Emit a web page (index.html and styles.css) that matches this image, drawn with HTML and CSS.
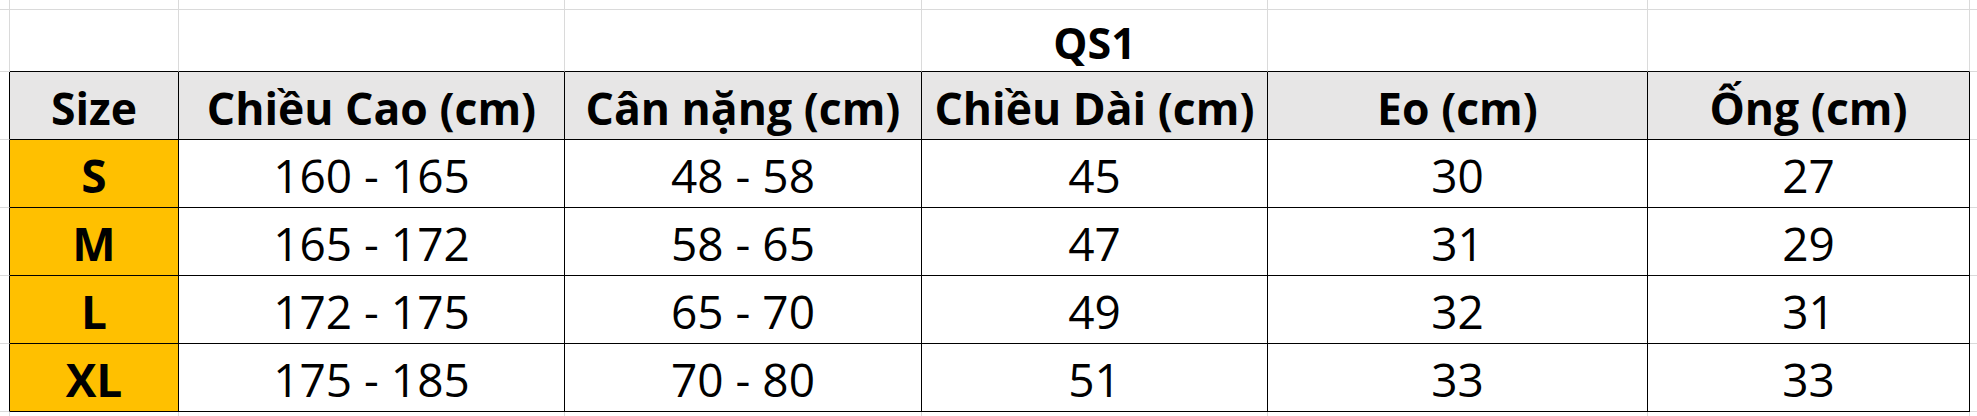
FILE: index.html
```html
<!DOCTYPE html>
<html lang="vi">
<head>
<meta charset="utf-8">
<title>QS1</title>
<link rel="stylesheet" href="styles.css">
</head>
<body>
<div class="sheet">
  <!-- row 0: partial row -->
  <div class="c"></div><div class="c"></div><div class="c"></div><div class="c"></div><div class="c"></div><div class="c"></div><div class="c"></div><div class="c end"></div>
  <!-- row 1: title -->
  <div class="c"></div>
  <div class="c top"></div>
  <div class="c top"></div>
  <div class="c top"></div>
  <div class="c top title">QS1</div>
  <div class="c top"></div>
  <div class="c top"></div>
  <div class="c end"></div>
  <!-- header -->
  <div class="c lead"></div>
  <div class="c t hd">Size</div>
  <div class="c t hd">Chiều Cao (cm)</div>
  <div class="c t hd">Cân nặng (cm)</div>
  <div class="c t hd">Chiều Dài (cm)</div>
  <div class="c t hd">Eo (cm)</div>
  <div class="c t hd">Ống (cm)</div>
  <div class="c end"></div>
  <!-- S -->
  <div class="c lead"></div>
  <div class="c t sz">S</div>
  <div class="c t">160 - 165</div>
  <div class="c t">48 - 58</div>
  <div class="c t">45</div>
  <div class="c t">30</div>
  <div class="c t">27</div>
  <div class="c end"></div>
  <!-- M -->
  <div class="c lead"></div>
  <div class="c t sz">M</div>
  <div class="c t">165 - 172</div>
  <div class="c t">58 - 65</div>
  <div class="c t">47</div>
  <div class="c t">31</div>
  <div class="c t">29</div>
  <div class="c end"></div>
  <!-- L -->
  <div class="c lead"></div>
  <div class="c t sz">L</div>
  <div class="c t">172 - 175</div>
  <div class="c t">65 - 70</div>
  <div class="c t">49</div>
  <div class="c t">32</div>
  <div class="c t">31</div>
  <div class="c end"></div>
  <!-- XL -->
  <div class="c lead"></div>
  <div class="c t sz">XL</div>
  <div class="c t">175 - 185</div>
  <div class="c t">70 - 80</div>
  <div class="c t">51</div>
  <div class="c t">33</div>
  <div class="c t">33</div>
  <div class="c end"></div>
  <!-- below -->
  <div class="c low"></div><div class="c low"></div><div class="c low"></div><div class="c low"></div><div class="c low"></div><div class="c low"></div><div class="c low"></div><div class="c low end"></div>
</div>
</body>
</html>
```

FILE: styles.css
```css
html, body {
  margin: 0;
  padding: 0;
  background: #ffffff;
}

body {
  width: 1977px;
  height: 416px;
  overflow: hidden;
  font-family: "Open Sans", "Noto Sans", "DejaVu Sans", sans-serif;
  color: #000000;
}

.sheet {
  display: grid;
  grid-template-columns: 10px 169px 386px 357px 346px 380px 322px 1fr;
  grid-template-rows: 4px 68px 68px 68px 68px 68px 68px 1fr;
  width: 1977px;
  height: 416px;
}

.c {
  box-sizing: border-box;
  border-right: 1px solid #dadada;
  border-bottom: 1px solid #dadada;
  display: flex;
  align-items: flex-end;
  justify-content: center;
  padding-bottom: 9px;
  font-size: 46px;
  line-height: 1;
  white-space: nowrap;
  overflow: hidden;
}

.end {
  border-right: none;
}

.low {
  border-bottom: none;
}

.top {
  border-bottom-color: #000000;
}

.lead {
  border-right-color: #000000;
}

.t {
  border-right-color: #000000;
  border-bottom-color: #000000;
}

.title {
  font-weight: 700;
  font-size: 43px;
  padding-bottom: 7px;
}

.hd {
  background: #e7e6e6;
  font-weight: 700;
  font-size: 44.5px;
}

.sz {
  background: #ffc000;
  font-weight: 700;
}
```
